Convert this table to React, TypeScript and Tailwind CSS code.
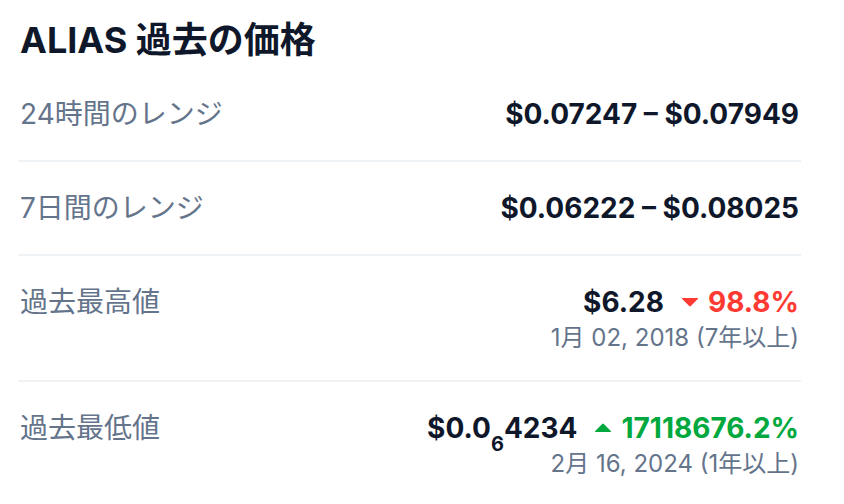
import React from 'react';

const font = { fontFamily: 'Inter, "Noto Sans CJK JP", sans-serif' };

const CaretDown: React.FC = () => (
  <svg width="18" height="10" viewBox="0 0 18 10" className="shrink-0">
    <path d="M1.5 1 H16.5 Q17.6 1 16.8 1.9 L9.8 9.1 Q9 9.9 8.2 9.1 L1.2 1.9 Q0.4 1 1.5 1 Z" fill="#ff3a33" />
  </svg>
);

const CaretUp: React.FC = () => (
  <svg width="18" height="10" viewBox="0 0 18 10" className="shrink-0">
    <path d="M1.5 9 H16.5 Q17.6 9 16.8 8.1 L9.8 0.9 Q9 0.1 8.2 0.9 L1.2 8.1 Q0.4 9 1.5 9 Z" fill="#00a83e" />
  </svg>
);

const rows = [
  { label: '24時間のレンジ', value: '$0.07247 – $0.07949' },
  { label: '7日間のレンジ', value: '$0.06222 – $0.08025' },
];

export default function App() {
  return (
    <div className="bg-white w-[844px] h-[504px] overflow-hidden px-[18px] pt-[12px]" style={font}>
      <h2 className="text-[36px] leading-[56px] font-bold text-[#0f172a] pl-[2px]">ALIAS 過去の価格</h2>

      <div className="w-[783px] flex flex-col">
        {rows.map((r) => (
          <div
            key={r.label}
            className="flex justify-between items-start py-[26px] border-b-2 border-[#eff2f5]"
          >
            <span className="text-[28px] leading-[40px] text-[#64748b] pl-[2px]">{r.label}</span>
            <span className="text-[28px] leading-[40px] font-bold text-[#0f172a] pr-[2px]">{r.value}</span>
          </div>
        ))}

        {/* All-time high */}
        <div className="flex justify-between items-start py-[26px] border-b-2 border-[#eff2f5]">
          <span className="text-[28px] leading-[40px] text-[#64748b] pl-[2px]">過去最高値</span>
          <div className="flex flex-col items-end pr-[2px]">
            <div className="flex items-center text-[28px] leading-[40px] font-bold">
              <span className="text-[#0f172a]">$6.28</span>
              <span className="ml-[17px] mr-[9px] flex">
                <CaretDown />
              </span>
              <span className="text-[#ff3a33]">98.8%</span>
            </div>
            <span className="text-[24px] leading-[32px] text-[#64748b]">1月 02, 2018 (7年以上)</span>
          </div>
        </div>

        {/* All-time low */}
        <div className="flex justify-between items-start py-[26px]">
          <span className="text-[28px] leading-[40px] text-[#64748b] pl-[2px]">過去最低値</span>
          <div className="flex flex-col items-end pr-[2px]">
            <div className="flex items-center text-[28px] leading-[40px] font-bold">
              <span className="text-[#0f172a]">
                $0.0<span className="text-[20px] leading-[0] align-[-13px]">6</span>4234
              </span>
              <span className="ml-[17px] mr-[9px] flex">
                <CaretUp />
              </span>
              <span className="text-[#00a83e]">17118676.2%</span>
            </div>
            <span className="text-[24px] leading-[32px] text-[#64748b]">2月 16, 2024 (1年以上)</span>
          </div>
        </div>
      </div>
    </div>
  );
}
